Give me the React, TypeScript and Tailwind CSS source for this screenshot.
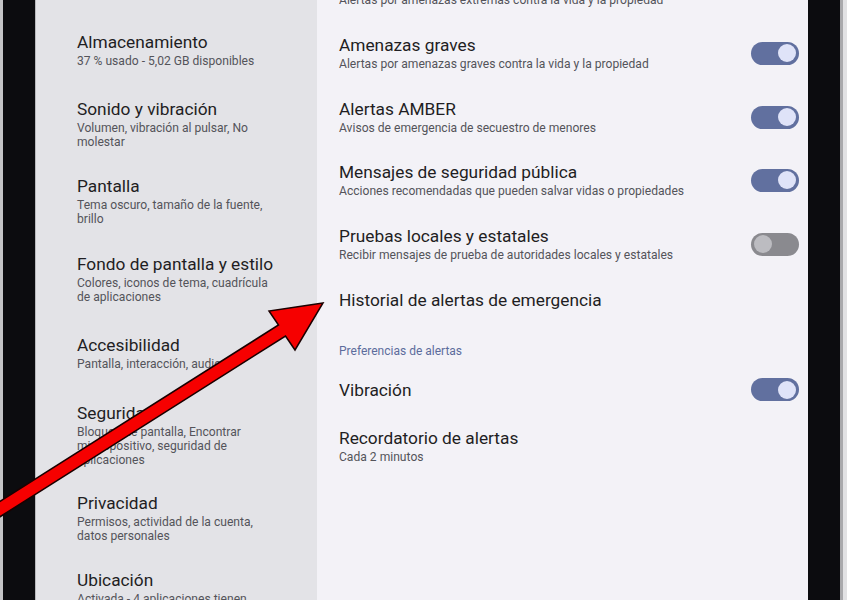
import React from "react";

type LeftItem = { title: string; lines: string[]; h: string };

const leftItems: LeftItem[] = [
  { title: "Almacenamiento", lines: ["37 % usado - 5,02 GB disponibles"], h: "h-[67px]" },
  { title: "Sonido y vibración", lines: ["Volumen, vibración al pulsar, No", "molestar"], h: "h-[77px]" },
  { title: "Pantalla", lines: ["Tema oscuro, tamaño de la fuente,", "brillo"], h: "h-[78px]" },
  { title: "Fondo de pantalla y estilo", lines: ["Colores, iconos de tema, cuadrícula", "de aplicaciones"], h: "h-[81px]" },
  { title: "Accesibilidad", lines: ["Pantalla, interacción, audio"], h: "h-[68px]" },
  { title: "Seguridad", lines: ["Bloqueo de pantalla, Encontrar", "mi dispositivo, seguridad de", "aplicaciones"], h: "h-[90px]" },
  { title: "Privacidad", lines: ["Permisos, actividad de la cuenta,", "datos personales"], h: "h-[77px]" },
  { title: "Ubicación", lines: ["Activada - 4 aplicaciones tienen", "acceso a la ubicación"], h: "h-[77px]" },
];

function Toggle({ on }: { on: boolean }) {
  return on ? (
    <div className="w-[48px] h-[23px] rounded-full bg-[#61709f] flex items-center justify-end pr-[3px] shrink-0">
      <div className="w-[18px] h-[18px] rounded-full bg-[#dfe3f8]" />
    </div>
  ) : (
    <div className="w-[48px] h-[23px] rounded-full bg-[#8a8a8f] flex items-center justify-start pl-[3px] shrink-0">
      <div className="w-[18px] h-[18px] rounded-full bg-[#bcbcc1]" />
    </div>
  );
}

function RightItem({
  title,
  sub,
  toggle,
  h,
}: {
  title: string;
  sub?: string;
  toggle?: "on" | "off";
  h: string;
}) {
  return (
    <div className={`${h} shrink-0`}>
      <div className="flex items-center">
        <div className="flex-1 min-w-0">
          <div className="text-[17.3px] leading-[20px] text-[#1f1e23] whitespace-nowrap">{title}</div>
          {sub && (
            <div className="mt-[2px] text-[12.1px] leading-[14px] text-[#54545a] whitespace-nowrap">{sub}</div>
          )}
        </div>
        {toggle && <Toggle on={toggle === "on"} />}
      </div>
    </div>
  );
}

export default function App() {
  return (
    <div
      className="relative w-[847px] h-[600px] overflow-hidden flex bg-[#0c0c0f]"
      style={{ fontFamily: "Roboto, 'Noto Sans', 'Liberation Sans', sans-serif" }}
    >
      {/* left bezel */}
      <div className="w-[3px] h-full bg-[#c4c4c6] shrink-0" />
      <div className="w-[32px] h-full bg-[#0c0c0f] shrink-0" />
      <div className="w-[1px] h-full bg-[#b9b9bc] shrink-0" />

      {/* left pane */}
      <div className="w-[281px] h-full bg-[#e3e3e7] shrink-0 pl-[41px] pt-[32px] flex flex-col overflow-hidden">
        {leftItems.map((it) => (
          <div key={it.title} className={`${it.h} shrink-0`}>
            <div className="text-[17.3px] leading-[20px] text-[#1f1e23] whitespace-nowrap">{it.title}</div>
            <div className="mt-[2px] text-[12.1px] leading-[14px] text-[#54545a] whitespace-nowrap">
              {it.lines.map((l, i) => (
                <div key={i}>{l}</div>
              ))}
            </div>
          </div>
        ))}
      </div>

      {/* right pane */}
      <div className="w-[491px] h-full bg-[#f3f2f7] shrink-0 pl-[22px] pr-[9px] overflow-hidden">
        <div className="-mt-[29px] flex flex-col">
          <RightItem
            h="h-[64px]"
            title="Amenazas extremas"
            sub="Alertas por amenazas extremas contra la vida y la propiedad"
          />
          <RightItem
            h="h-[64px]"
            title="Amenazas graves"
            sub="Alertas por amenazas graves contra la vida y la propiedad"
            toggle="on"
          />
          <RightItem
            h="h-[63px]"
            title="Alertas AMBER"
            sub="Avisos de emergencia de secuestro de menores"
            toggle="on"
          />
          <RightItem
            h="h-[64px]"
            title="Mensajes de seguridad pública"
            sub="Acciones recomendadas que pueden salvar vidas o propiedades"
            toggle="on"
          />
          <RightItem
            h="h-[64px]"
            title="Pruebas locales y estatales"
            sub="Recibir mensajes de prueba de autoridades locales y estatales"
            toggle="off"
          />
          <RightItem h="h-[54px]" title="Historial de alertas de emergencia" />
          <div className="h-[34px] shrink-0 text-[12px] leading-[14px] text-[#5c6c9c]">
            Preferencias de alertas
          </div>
          <RightItem h="h-[50px]" title="Vibración" toggle="on" />
          <RightItem h="h-[64px]" title="Recordatorio de alertas" sub="Cada 2 minutos" />
        </div>
      </div>

      {/* right bezel */}
      <div className="w-[32px] h-full bg-[#0c0c0f] shrink-0" />
      <div className="w-[3px] h-full bg-[#a9a9ac] shrink-0" />
      <div className="flex-1 h-full bg-[#e2e2e4]" />

      {/* red arrow overlay */}
      <svg
        className="absolute inset-0 pointer-events-none"
        width={847}
        height={600}
        viewBox="0 0 847 600"
      >
        <polygon
          points="-23.5,516.2 278.5,325 269,311 323,303 295,350 285.5,336 -16.5,527.2"
          fill="#f60000"
          stroke="#1a0000"
          strokeWidth={1.5}
          strokeLinejoin="miter"
        />
      </svg>
    </div>
  );
}
